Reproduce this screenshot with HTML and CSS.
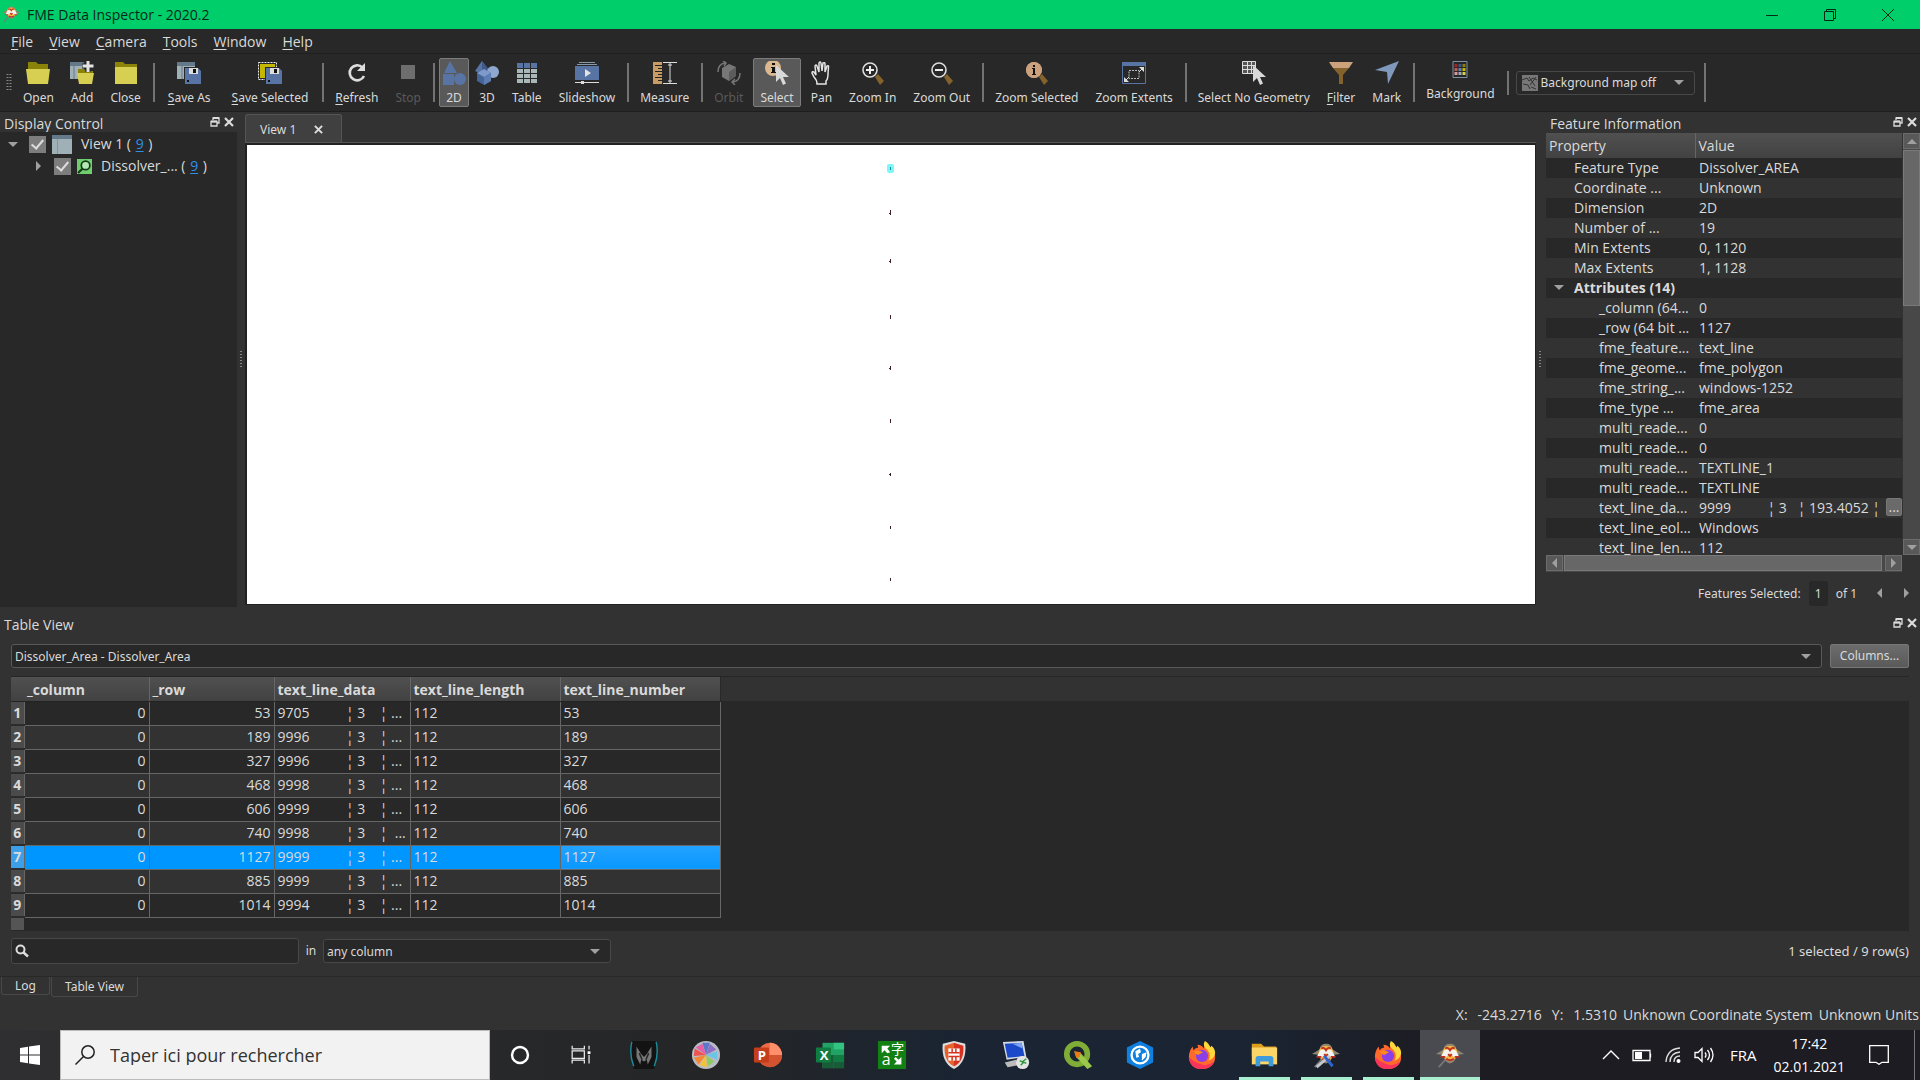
FILE: index.html
```html
<!DOCTYPE html>
<html lang="en">
<head>
  <meta charset="UTF-8">
  <title>FME Data Inspector - 2020.2</title>
  <link rel="stylesheet" href="styles.css">
</head>
<body>

  <!-- shared icons -->
  <svg class="defs" aria-hidden="true">
    <symbol id="i-float" viewBox="0 0 10 10"><path d="M3 3V1h6v5H7M1 4.500h6V9H1z" fill="none" stroke="#ddd" stroke-width="1.300"/><path d="M3 1h6M1 4.500h6" stroke="#ddd" stroke-width="2"/></symbol>
    <symbol id="i-close" viewBox="0 0 10 10"><path d="M1 1l8 8M9 1L1 9" stroke="#ddd" stroke-width="2.200"/></symbol>
    <symbol id="i-lens" viewBox="0 0 24 24"><path d="M14 16l3-3 6 7-4 4z" fill="#84622c"/><circle cx="9" cy="9" r="7" fill="none" stroke="#ddd" stroke-width="1.600"/></symbol>
    <symbol id="i-disk" viewBox="0 0 16 16"><path d="M0 0h13l3 3v13H0z" fill="#5874a5"/><path d="M4 0h9v6H4z" fill="#ddd"/><path d="M8 1h3v4H8zM2 12h2v2H2z" fill="#111"/></symbol>
    <symbol id="i-cursor" viewBox="0 0 14 20"><path d="M1 0v17l4-4 3 7 3-1.500-3-6.500h6z" fill="#d8d8d8"/></symbol>
    <symbol id="i-eagle" viewBox="0 0 32 32">
      <path d="M12 20L4 29" stroke="#777" stroke-width="2"/>
      <path d="M16 4q6 0 7 6l8 5-8 1q-1 8-7 9-6-1-7-9l-8-1 8-5q1-6 7-6z" fill="#8f8672"/>
      <circle cx="16" cy="14" r="8" fill="#f4b63e"/>
      <path d="M10 11q3-2 6 1 3-3 6-1l4 7h-6l-4-4-4 4H6z" fill="#f3f3f0"/>
      <path d="M11 9q3-2 5 2 2-4 5-2M6 18h5M26 18h-5M12 20q4 3 8 0M14 15l2 2 2-2" stroke="#c22c22" stroke-width="1.800" fill="none"/>
    </symbol>
    <symbol id="i-firefox" viewBox="0 0 32 32">
      <path d="M19 2q6 4 8 9 3 1 3 8c0 7-6 12-14 12S2 25 2 18q0-6 4-11l1 4q2-3 5-3l-1-3q5 0 7 4z" fill="#ff6a2b"/>
      <path d="M19 1q-3 6 3 10 4 5 1 11 6-2 7-8 0-5-4-8l-1 2q-2-5-6-7z" fill="#ffd83c"/>
      <path d="M2 18q1 13 14 13 10 0 13-8-6 5-13 3-8-2-14-8z" fill="#f8345d"/>
      <circle cx="16" cy="17" r="6.500" fill="#8a3fe8"/>
      <path d="M7 12q6-2 10 1l-5 3q-3-1-5-4z" fill="#ff8a1e"/>
    </symbol>
  </svg>

  <header class="titlebar">
    <svg class="app-icon" viewBox="1 2 29 28"><use href="#i-eagle"/></svg>
    <h1>FME Data Inspector - 2020.2</h1>
    <div class="window-buttons">
      <button aria-label="Minimize"><svg viewBox="0 0 12 12"><path d="M0 6.500h12"/></svg></button>
      <button aria-label="Restore"><svg viewBox="0 0 12 12"><path d="M.5 2.500h9v9h-9zM2.500 2.500v-2h9v9h-2"/></svg></button>
      <button aria-label="Close"><svg viewBox="0 0 12 12"><path d="M0 0l12 12M12 0L0 12"/></svg></button>
    </div>
  </header>

  <nav class="menubar">
    <button><u>F</u>ile</button>
    <button><u>V</u>iew</button>
    <button><u>C</u>amera</button>
    <button><u>T</u>ools</button>
    <button><u>W</u>indow</button>
    <button><u>H</u>elp</button>
  </nav>

  <div class="toolbar">
    <svg class="grip" viewBox="0 0 6 18"><path d="M1.500 0v18M4.500 0v18" stroke="#888" stroke-width="2" stroke-dasharray="1 2"/></svg>
    <div class="tools">
      <button><svg viewBox="0 0 24 24"><path d="M2 9V1h8l2 2h10v6z" fill="#8b8309"/><path d="M0 8h24l-2 15H2z" fill="#d6cf52"/></svg>Open</button>
      <button><svg viewBox="0 0 24 24"><path d="M0 1h14v17H0z" fill="#9fb0b6"/><path d="M0 1h14v4H0z" fill="#64798a"/><path d="M4 5v13" stroke="#64798a"/><path d="M8 13V8h6l2 2h7v3z" fill="#8b8309"/><path d="M7 12h17l-2 11H9z" fill="#d6cf52"/><path d="M18 0v11M12 5h12" stroke="#282828" stroke-width="5"/><path d="M18 0v11M12.500 5h11" stroke="#e4e4e4" stroke-width="3"/></svg>Add</button>
      <button><svg viewBox="0 0 24 24"><path d="M1 8V1h8l2 2h12v5z" fill="#8b8309"/><path d="M1 6h22v17H1z" fill="#d6cf52"/></svg>Close</button>
    </div>
    <div class="tools wide">
      <button><svg viewBox="0 0 24 24"><path d="M0 1h18v17H0z" fill="#9fb0b6"/><path d="M0 1h18v4H0z" fill="#64798a"/><path d="M5 5v13" stroke="#64798a"/><path d="M7 6h17v18H7z" fill="#282828"/><use href="#i-disk" x="8" y="7" width="16" height="16"/></svg><span><u>S</u>ave As</span></button>
      <button><svg viewBox="0 0 24 24"><path d="M2 3h15v14H2z" fill="#c4b900"/><path d="M.5 1.500h18v17H.5z" fill="none" stroke="#eee" stroke-dasharray="2 1"/><path d="M7 6h17v18H7z" fill="#282828"/><use href="#i-disk" x="8" y="7" width="16" height="16"/></svg><span><u>S</u>ave Selected</span></button>
    </div>
    <div class="tools">
      <button><svg viewBox="0 0 24 24"><path d="M17.500 6.500A7.500 7.500 0 1 0 19 15" fill="none" stroke="#ddd" stroke-width="2.600"/><path d="M20 2v8h-8z" fill="#ddd"/></svg><span><u>R</u>efresh</span></button>
      <button disabled><svg viewBox="0 0 24 24"><path d="M5 4h14v14H5z" fill="#6e6e6e"/></svg>Stop</button>
    </div>
    <div class="tools">
      <button class="active"><svg viewBox="0 0 24 24"><path d="M8 0l7 12H2zM1 13h11v11H1z" fill="#5874a5"/><circle cx="18" cy="18" r="6" fill="#5874a5"/></svg>2D</button>
      <button><svg viewBox="0 0 24 24"><path d="M7 0l7 9-7 4-7-3z" fill="#5874a5"/><path d="M7 0l7 9-7 4z" fill="#3f5a8a"/><circle cx="18" cy="11" r="6" fill="#8ea7cf"/><path d="M2 12l7-4 7 4v8l-7 4-7-4z" fill="#456599"/><path d="M2 12l7-4 7 4-7 4z" fill="#7d9aca"/><path d="M9 16l7-4v8l-7 4z" fill="#5d7db3"/></svg>3D</button>
      <button><svg viewBox="0 0 24 24"><path d="M2 2h6v5H2zM9 2h6v5H9zM16 2h6v5h-6z" fill="#5874a5"/><path d="M2 8h6v4H2zM9 8h6v4H9zM16 8h6v4h-6zM2 13h6v4H2zM9 13h6v4H9zM16 13h6v4h-6zM2 18h6v4H2zM9 18h6v4H9zM16 18h6v4h-6z" fill="#a9b7b7"/></svg>Table</button>
      <button><svg viewBox="0 0 24 24"><path d="M4 1.500h16M2 3.500h20" stroke="#8797ad"/><path d="M0 5h24v14H0z" fill="#5874a5"/><path d="M10 8l6 4-6 4z" fill="#e4e4e4"/><path d="M0 21.500h24" stroke="#ddd"/><path d="M6 20h3v3H6z" fill="#ddd"/></svg>Slideshow</button>
    </div>
    <div class="tools">
      <button><svg viewBox="0 0 24 24"><path d="M0 1h9v22H0z" fill="#c99c66"/><path d="M2 4.500h7M5 7.500h4M2 10.500h7M5 13.500h4M2 16.500h7M5 19.500h4" stroke="#222"/><path d="M10 1.500h14M10 22.500h14M17 2v20M15 4h4M15 20h4" stroke="#ddd"/></svg>Measure</button>
    </div>
    <div class="tools">
      <button disabled><svg viewBox="0 0 24 24"><path d="M5 7l7-4 7 3v9l-7 5-7-4z" fill="#777"/><path d="M12 11l7-5v9l-7 5z" fill="#5c5c5c"/><path d="M1 11Q1 3 8 2M23 12q0 8-7 9M6 0l3 2-2 3M18 18l-3 3 3 3" stroke="#777" stroke-width="1.500" fill="none"/></svg>Orbit</button>
      <button class="active"><svg viewBox="0 0 24 24"><circle cx="8" cy="7" r="8" fill="#dcb88e"/><path d="M7 2h3v2H7zM6 6h4v5h1v1H6v-1h1V7H6z" fill="#111"/><use href="#i-cursor" x="10" y="4" width="14" height="20"/></svg>Select</button>
      <button><svg viewBox="0 0 24 24"><path d="M8 23q0-4-3-7l-2-4q0-2 2-1l2 3-1-9q1-2 2 0l2 6V2q1-2 2 0l1 8 1-8q2-1 2 1v8l2-6q2-1 1.500 1L19 13q0 5-2 7v3z" fill="none" stroke="#e4e4e4" stroke-width="1.500"/></svg>Pan</button>
      <button><svg viewBox="0 0 24 24"><use href="#i-lens"/><path d="M5 9h8M9 5v8" stroke="#eee" stroke-width="2"/></svg>Zoom In</button>
      <button><svg viewBox="0 0 24 24"><use href="#i-lens"/><path d="M5 9h8" stroke="#eee" stroke-width="2"/></svg>Zoom Out</button>
    </div>
    <div class="tools">
      <button><svg viewBox="0 0 24 24"><use href="#i-lens"/><circle cx="9" cy="9" r="8" fill="#cba27b"/><path d="M8 4h2v2H8zM7 7h3v6h1v1H7v-1h1V8H7z" fill="#111"/></svg>Zoom Selected</button>
      <button><svg viewBox="0 0 24 24"><path d="M.5 1.500h23v21H.5z" fill="none" stroke="#5874a5"/><path d="M0 1h24v4H0z" fill="#5874a5"/><path d="M7 9.500h10v8H7z" fill="none" stroke="#bbb" stroke-dasharray="2 1"/><path d="M17 6h5v5zM2 16v5h5z" fill="#ddd"/><path d="M17 11l3-3M4 19l3-3" stroke="#ddd"/></svg>Zoom Extents</button>
    </div>
    <div class="tools">
      <button><svg viewBox="0 0 24 24"><path d="M.5.5h13v12H.5zM.5 4.500h13M.5 8.500h13M5.500.5v12M9.500.5v12" fill="#555" stroke="#ddd"/><use href="#i-cursor" x="10" y="4" width="14" height="20"/></svg>Select No Geometry</button>
      <button><svg viewBox="0 0 24 24"><path d="M0 1h24l-4 6H4z" fill="#cba27b"/><path d="M4 7h16l-6 7v9h-4v-9z" fill="#84622c"/></svg><span><u>F</u>ilter</span></button>
      <button><svg viewBox="0 0 24 24"><path d="M24 0L13 23l-1-12-12-2z" fill="#7f98bb"/></svg>Mark</button>
    </div>
    <div class="tools">
      <button class="raised"><svg viewBox="0 0 24 24"><path d="M5 .5h14v16H5z" fill="#272727" stroke="#8090a8"/><path d="M6.500 3h3v3h-3z" fill="#a32222"/><path d="M6.500 7h3v3h-3z" fill="#c05a5a"/><path d="M6.500 11h3v3h-3z" fill="#d99"/><path d="M10.500 3h3v3h-3z" fill="#3a5588"/><path d="M10.500 7h3v3h-3z" fill="#6680ad"/><path d="M10.500 11h3v3h-3z" fill="#9ab"/><path d="M14.500 3h3v3h-3z" fill="#8b8309"/><path d="M14.500 7h3v3h-3z" fill="#c4b900"/><path d="M14.500 11h3v3h-3z" fill="#d6cf52"/></svg>Background</button>
    </div>
    <div class="tools">
      <div class="combo map-combo">
        <svg class="map-icon" viewBox="0 0 16 16"><path d="M0 0h16v16H0z" fill="#777"/><path d="M0 5l5-2 2 3 4-3 4 2M1 9l5 1 2 4M7 2l6 9M14 2L8 10M9 12l5 2" fill="none" stroke="#333"/></svg>
        <select aria-label="Background map"><option>Background map off</option></select>
      </div>
    </div>
    <div class="tools last"></div>
  </div>

  <main class="workspace">
    <section class="display-control">
      <div class="dock-title"><h2>Display Control</h2>
        <button aria-label="Float"><svg><use href="#i-float"/></svg></button><button aria-label="Close"><svg><use href="#i-close"/></svg></button>
      </div>
      <div class="tree">
        <div class="tree-row">
          <span class="arrow down"></span>
          <input type="checkbox" id="view1" checked>
          <svg class="view-icon" viewBox="0 0 20 19"><path d="M0 0h20v19H0z" fill="#9fb0b6"/><path d="M0 0h20v4H0z" fill="#64798a"/><path d="M5.500 4v15" stroke="#84959c"/></svg>
          <label for="view1">View 1 ( <a href="#">9</a> )</label>
        </div>
        <div class="tree-row child">
          <span class="arrow right"></span>
          <input type="checkbox" id="dissolver" checked>
          <svg class="layer-icon" viewBox="0 0 14 14"><path d="M0 0h14v14H0z" fill="#6fcf70"/><circle cx="8" cy="6" r="4" fill="#b5e8b5" stroke="#143a16" stroke-width="1.600"/><path d="M5 9l-4 4" stroke="#143a16" stroke-width="2"/></svg>
          <label for="dissolver">Dissolver_... ( <a href="#">9</a> )</label>
        </div>
      </div>
    </section>

    <div class="splitter"></div>

    <section class="view">
      <div class="view-tabs">
        <div class="view-tab">View 1 <button aria-label="Close view"><svg><use href="#i-close"/></svg></button></div>
      </div>
      <div class="canvas">
        <svg width="20" height="456" viewBox="0 0 20 456">
          <rect x="6" y="19" width="7" height="9" rx="2" fill="#7ff6f8"/>
          <path d="M9.500 22v3" stroke="#0a8f98"/>
          <path d="M9.500 65v5M9.500 114v4M9.500 170v4M9.500 221v4M9.500 274v4M9.500 328v3M9.500 381v3M9.500 433v3M8 68.500h1M8 116.500h1M8 223.500h1M8 329.500h1" stroke="#3a1f28"/>
        </svg>
      </div>
    </section>

    <div class="splitter"></div>

    <section class="feature-info">
      <div class="dock-title"><h2>Feature Information</h2>
        <button aria-label="Float"><svg><use href="#i-float"/></svg></button><button aria-label="Close"><svg><use href="#i-close"/></svg></button>
      </div>
      <div class="props">
        <div class="props-clip">
          <table>
            <thead><tr><th>Property</th><th>Value</th></tr></thead>
            <tbody>
              <tr><td>Feature Type</td><td>Dissolver_AREA</td></tr>
              <tr><td>Coordinate ...</td><td>Unknown</td></tr>
              <tr><td>Dimension</td><td>2D</td></tr>
              <tr><td>Number of ...</td><td>19</td></tr>
              <tr><td>Min Extents</td><td>0, 1120</td></tr>
              <tr><td>Max Extents</td><td>1, 1128</td></tr>
              <tr class="group"><td><span class="arrow down"></span>Attributes (14)</td><td></td></tr>
              <tr class="attr"><td>_column (64...</td><td>0</td></tr>
              <tr class="attr"><td>_row (64 bit ...</td><td>1127</td></tr>
              <tr class="attr"><td>fme_feature...</td><td>text_line</td></tr>
              <tr class="attr"><td>fme_geome...</td><td>fme_polygon</td></tr>
              <tr class="attr"><td>fme_string_...</td><td>windows-1252</td></tr>
              <tr class="attr"><td>fme_type ...</td><td>fme_area</td></tr>
              <tr class="attr"><td>multi_reade...</td><td>0</td></tr>
              <tr class="attr"><td>multi_reade...</td><td>0</td></tr>
              <tr class="attr"><td>multi_reade...</td><td>TEXTLINE_1</td></tr>
              <tr class="attr"><td>multi_reade...</td><td>TEXTLINE</td></tr>
              <tr class="attr"><td>text_line_da...</td><td class="long"><div class="long-value"><span>9999          ¦ 3   ¦ 193.4052 ¦</span><button>...</button></div></td></tr>
              <tr class="attr"><td>text_line_eol...</td><td>Windows</td></tr>
              <tr class="attr"><td>text_line_len...</td><td>112</td></tr>
            </tbody>
          </table>
        </div>
        <div class="vscroll"><button aria-label="Up"><span class="arrow up"></span></button><div class="thumb"></div><button aria-label="Down"><span class="arrow down"></span></button></div>
        <div class="hscroll"><button aria-label="Left"><span class="arrow left"></span></button><div class="thumb"></div><button aria-label="Right"><span class="arrow right"></span></button></div>
      </div>
      <div class="feature-nav">
        <label for="feature">Features Selected:</label>
        <input type="text" id="feature" value="1">
        <span>of 1</span>
        <button aria-label="Previous"><span class="arrow left"></span></button>
        <button aria-label="Next"><span class="arrow right"></span></button>
      </div>
    </section>
  </main>

  <section class="table-view">
    <div class="dock-title"><h2>Table View</h2>
      <button aria-label="Float"><svg><use href="#i-float"/></svg></button><button aria-label="Close"><svg><use href="#i-close"/></svg></button>
    </div>
    <div class="table-source">
      <div class="combo"><select aria-label="Feature type"><option>Dissolver_Area - Dissolver_Area</option></select></div>
      <button class="push">Columns...</button>
    </div>
    <div class="grid-frame">
      <table class="data">
        <colgroup><col class="c-num"><col class="c-int"><col class="c-int"><col class="c-data"><col class="c-length"><col class="c-number"></colgroup>
        <thead><tr><th></th><th>_column</th><th>_row</th><th>text_line_data</th><th>text_line_length</th><th>text_line_number</th></tr></thead>
        <tbody>
          <tr><th>1</th><td>0</td><td>53</td><td>9705          ¦ 3    ¦ ...</td><td>112</td><td>53</td></tr>
          <tr><th>2</th><td>0</td><td>189</td><td>9996          ¦ 3    ¦ ...</td><td>112</td><td>189</td></tr>
          <tr><th>3</th><td>0</td><td>327</td><td>9996          ¦ 3    ¦ ...</td><td>112</td><td>327</td></tr>
          <tr><th>4</th><td>0</td><td>468</td><td>9998          ¦ 3    ¦ ...</td><td>112</td><td>468</td></tr>
          <tr><th>5</th><td>0</td><td>606</td><td>9999          ¦ 3    ¦ ...</td><td>112</td><td>606</td></tr>
          <tr><th>6</th><td>0</td><td>740</td><td>9998          ¦ 3    ¦  ...</td><td>112</td><td>740</td></tr>
          <tr class="selected"><th>7</th><td>0</td><td>1127</td><td>9999          ¦ 3    ¦ ...</td><td>112</td><td>1127</td></tr>
          <tr><th>8</th><td>0</td><td>885</td><td>9999          ¦ 3    ¦ ...</td><td>112</td><td>885</td></tr>
          <tr><th>9</th><td>0</td><td>1014</td><td>9994          ¦ 3    ¦ ...</td><td>112</td><td>1014</td></tr>
        </tbody>
        <tfoot><tr><th></th></tr></tfoot>
      </table>
      <div class="header-rest"></div>
    </div>
    <div class="filter-row">
      <div class="search">
        <svg viewBox="0 0 14 14"><circle cx="5.500" cy="5.500" r="4" fill="none" stroke="#ddd" stroke-width="2"/><path d="M8.500 8.500l4.500 4" stroke="#ddd" stroke-width="2.500"/></svg>
        <input type="text" aria-label="Search">
      </div>
      <label for="column">in</label>
      <div class="combo column-combo"><select id="column"><option>any column</option></select></div>
      <span class="row-count">1 selected / 9 row(s)</span>
    </div>
    <div class="dock-tabs">
      <button>Log</button>
      <button class="current">Table View</button>
    </div>
  </section>

  <footer class="statusbar">
    <span>X:</span><span>-243.2716</span><span>Y:</span><span>1.5310</span>
    <span class="system">Unknown Coordinate System</span><span class="units">Unknown Units</span>
  </footer>

  <div class="taskbar">
    <button class="start" aria-label="Start"><svg viewBox="0 0 20 20"><path d="M0 3l8-1.200V9.500H0zM9 1.600L20 0v9.500H9zM0 10.500h8v7.700L0 17zM9 10.500h11V20L9 18.400z" fill="#fff"/></svg></button>
    <label class="task-search">
      <svg viewBox="0 0 20 20"><circle cx="13" cy="7" r="6.200" fill="none" stroke="#222" stroke-width="1.500"/><path d="M8.500 11.500L.5 19.500" stroke="#222" stroke-width="1.500"/></svg>
      <input type="text" placeholder="Taper ici pour rechercher" aria-label="Taper ici pour rechercher">
    </label>
    <div class="apps">
      <button aria-label="Cortana"><svg viewBox="0 0 32 32"><circle cx="16" cy="16" r="8.500" fill="none" stroke="#fff" stroke-width="2.600"/></svg></button>
      <button aria-label="Task view"><svg viewBox="0 0 32 32"><path d="M5.500 6v3.500h13V6M5.500 25v-3.500h13V25M5.500 11.500h13v8h-13zM23.500 6v4M23.500 16v9" fill="none" stroke="#eee" stroke-width="1.300"/><path d="M22 12h3v3h-3z" fill="#fff"/></svg></button>
      <button aria-label="Predator"><svg viewBox="0 0 32 32"><path d="M3 1h26q2 15-2 30H5Q1 16 3 1z" fill="#131313"/><path d="M3 2Q0 15 5 28M29 2q3 13-2 26" stroke="#1a8c99" stroke-width="1.500" fill="none"/><path d="M8 7l5 8 3 3 3-3 5-8v11l-4 8-1-5-3 2-3-2-1 5-4-8z" fill="#777"/><path d="M11 14l3 7M21 14l-3 7" stroke="#222" stroke-width="1.500"/></svg></button>
      <button aria-label="Photos"><svg viewBox="0 0 32 32"><circle cx="16" cy="16" r="15" fill="#b9bcc4"/><path d="M16 16L12 3h8z" fill="#5c78c8"/><path d="M16 16L20 4l7 6z" fill="#8d71c6"/><path d="M16 16l12-4v9z" fill="#6cc4e8"/><path d="M16 16l9 7-7 5z" fill="#8ccc66"/><path d="M16 16l1 13-8-2z" fill="#f3c13c"/><path d="M16 16l-8 10-5-7z" fill="#f58634"/><path d="M16 16l-13 1 1-8z" fill="#ef5350"/><path d="M16 16L5 8l7-4z" fill="#e85fa5"/></svg></button>
      <button aria-label="PowerPoint"><svg viewBox="0 0 32 32"><circle cx="18" cy="16" r="13" fill="#ed6c47"/><path d="M18 3a13 13 0 0 1 13 13H18z" fill="#ff8f6b"/><path d="M5 16h26a13 13 0 0 1-26 0z" fill="#d35230"/><rect x="1" y="8" width="16" height="16" rx="1" fill="#c43e1c"/><text x="5" y="21" class="logo">P</text></svg></button>
      <button aria-label="Excel"><svg viewBox="0 0 32 32"><path d="M8 3h23v27H8z" fill="#21a366"/><path d="M20 3h11v7H20z" fill="#33c481"/><path d="M8 16h12v14H8z" fill="#185c37"/><path d="M20 16h11v7H20z" fill="#107c41"/><path d="M20 23h11v7H20z" fill="#185c37"/><rect x="1" y="8" width="16" height="16" rx="1" fill="#107c41"/><text x="5" y="21" class="logo">X</text></svg></button>
      <button aria-label="Translator"><svg viewBox="0 0 32 32"><path d="M1 1h30v30H1z" fill="#128012"/><text x="15" y="15" class="logo cjk">字</text><text x="5" y="27" class="logo plain">a</text><path d="M5 6l9 0-3 3 3 4-3 1-3-3-3 3zM26 18v8h-8l3-3-3-3 2-2 3 3z" fill="#fff"/></svg></button>
      <button aria-label="FortiClient"><svg viewBox="0 0 32 32"><path d="M16 1l12 3q2 20-12 27Q2 24 4 4z" fill="#ddd"/><path d="M16 3l10 3q1 17-10 22z" fill="#d6321f"/><path d="M16 3L6 6q-1 17 10 22z" fill="#e8622c"/><path d="M10 9h12v13H10z" fill="#fff"/><path d="M10 13.500h12M10 17.500h12M14 9v4M18 9v4M14 18v4M18 18v4" stroke="#d6321f" stroke-width="1.600"/></svg></button>
      <button aria-label="Remote desktop"><svg viewBox="0 0 32 32"><path d="M2 2l22-1 3 17-21 3z" fill="#d3dae6"/><path d="M4 4l18-1 3 14-18 2z" fill="#1c49c9"/><path d="M12 4l10-1 1 6z" fill="#7da4f2"/><path d="M4 24l12-3 2 6-11 2z" fill="#bbb"/><circle cx="23" cy="24" r="7" fill="#e4e4e4"/><path d="M20 22l4 2-3 3M27 20l-4 3 4 2" stroke="#2c9a3a" stroke-width="1.500" fill="none"/></svg></button>
      <button aria-label="QGIS"><svg viewBox="0 0 32 32"><circle cx="15" cy="15" r="11" fill="none" stroke="#80ad35" stroke-width="6"/><path d="M12 12l7 2 12 14-5 3-12-13z" fill="#9bc84b"/><path d="M12 12l7 1-1 5-4 1z" fill="#ee7913"/></svg></button>
      <button aria-label="ArcGIS"><svg viewBox="0 0 32 32"><path d="M16 1l14 7v16l-14 7-14-7V8z" fill="#0f7fe0"/><circle cx="16" cy="16" r="9" fill="none" stroke="#fff" stroke-width="2.500"/><path d="M11 12l5-3 1 4-3 2 1 3-3 1zM18 15l5-2-1 5-4 4z" fill="#fff"/></svg></button>
      <button aria-label="Firefox"><svg viewBox="0 0 32 32"><use href="#i-firefox"/></svg></button>
      <button class="running" aria-label="Explorer"><svg viewBox="0 0 32 32"><path d="M3 4h10l3 3h13v10H3z" fill="#dd9e1c"/><path d="M3 8h27v18H3z" fill="#fbd568"/><path d="M7 28v-8q0-3 3-3h13q3 0 3 3v8h-5v-5h-9v5z" fill="#3f9bdc"/></svg></button>
      <button class="running" aria-label="FME Workbench"><svg viewBox="0 0 32 32"><use href="#i-eagle"/><path d="M6 29l14-12" stroke="#c4c8cc" stroke-width="3"/><path d="M14 17l9 11" stroke="#2c66d4" stroke-width="3"/></svg></button>
      <button class="running" aria-label="Firefox"><svg viewBox="0 0 32 32"><use href="#i-firefox"/></svg></button>
      <button class="running focused" aria-label="FME Data Inspector"><svg viewBox="0 0 32 32"><use href="#i-eagle"/></svg></button>
    </div>
    <div class="tray">
      <svg viewBox="0 0 20 20"><path d="M2 14l8-8 8 8" fill="none" stroke="#fff" stroke-width="1.400"/></svg>
      <svg viewBox="0 0 20 20"><path d="M1 5.500h17v10H1zM18.500 8.500v4" fill="none" stroke="#fff" stroke-width="1.300"/><path d="M3 7h7v7H3z" fill="#fff"/></svg>
      <svg viewBox="0 0 20 20"><path d="M3 17Q4 4 17 3M7 17Q7 8 17 7M11 17q0-6 6-6" fill="none" stroke="#ddd" stroke-width="1.400"/><circle cx="15.500" cy="16" r="2" fill="#fff"/></svg>
      <svg viewBox="0 0 20 20"><path d="M1 7.500h3l4-4v13l-4-4H1zM11 7.500q2 2.500 0 5M13.500 5q4 5 0 10M16.500 3q5 7 0 14" fill="none" stroke="#fff" stroke-width="1.300"/></svg>
      <span>FRA</span>
      <time class="clock">17:42<br>02.01.2021</time>
      <svg class="notify" viewBox="0 0 20 20"><path d="M.7.7h18.600v16.600H13l-3 2-3-2H.7z" fill="none" stroke="#fff" stroke-width="1.300"/></svg>
    </div>
  </div>

</body>
</html>
```
FILE: styles.css
```css
* { box-sizing: border-box; }
body { margin: 0; height: 100vh; display: flex; flex-direction: column; overflow: hidden; background: #323232; color: #dadada; font: 14px/20px "Open Sans", "Noto Sans", sans-serif; }
button, input, select { font: inherit; color: inherit; background: none; border: 0; padding: 0; margin: 0; }
h1, h2 { margin: 0; font-size: 14px; font-weight: normal; }
svg { display: block; }
u { text-underline-offset: 2px; }
.defs { width: 0; height: 0; flex: none; position: absolute; }

/* title and menu */
.titlebar { height: 29px; flex: none; display: flex; align-items: center; background: #00ce6a; color: #06281a; }
.app-icon { width: 20px; height: 20px; margin: 0 5px 0 2px; }
.window-buttons { margin-left: auto; margin-right: 3px; display: flex; }
.window-buttons button { width: 58px; height: 28px; display: flex; align-items: center; justify-content: center; }
.window-buttons svg { width: 12px; height: 12px; fill: none; stroke: #002a12; }
.menubar { height: 25px; flex: none; display: flex; align-items: center; gap: 16px; padding: 1px 11px 0; background: #282828; border-bottom: 1px solid #202020; }

/* toolbar */
.toolbar { height: 58px; flex: none; display: flex; align-items: center; padding-left: 6px; background: #282828; border-bottom: 1px solid #1e1e1e; font: 12px/16px "Noto Sans", sans-serif; }
.grip { width: 6px; height: 18px; margin-right: -1px; }
.tools { display: flex; align-items: center; gap: 3px; padding: 0 5px; }
.tools + .tools { background: linear-gradient(#737373, #737373) left center / 2px 39px no-repeat; padding-left: 6px; }
.tools.last { height: 39px; }
.tools button { height: 49px; min-width: 30px; padding: 2px 6px 0; display: flex; flex-direction: column; align-items: center; gap: 5px; border: 1px solid transparent; border-radius: 2px; white-space: nowrap; }
.tools.wide button { padding: 2px 8px 0; }
.tools button svg { width: 24px; height: 24px; margin: 0 -4px; }
.tools button:disabled { color: #5a5a5a; }
.tools .active { background: #595959; border-color: #7c7c7c; }
.tools .raised { gap: 1px; }

/* combo boxes */
.combo { display: flex; align-items: center; height: 24px; background: #282828; border: 1px solid #484848; border-radius: 3px; font: 12px/16px "Noto Sans", sans-serif; }
.combo select { appearance: none; flex: 1; height: 22px; padding: 1px 3px 0; outline: 0; }
.combo::after { content: ""; border: 5px solid transparent; border-top-color: #a0a0a0; border-bottom: 0; margin-right: 10px; }
.map-combo { width: 179px; margin-left: 3px; margin-right: 4px; }
.map-combo svg { width: 16px; height: 16px; margin-left: 5px; }

/* docks */
.workspace { flex: 1; min-height: 0; display: flex; }
.dock-title { display: flex; align-items: center; gap: 4px; height: 20px; padding: 0 3px 0 4px; }
.dock-title h2 { flex: 1; padding-top: 3px; }
.dock-title svg { width: 10px; height: 10px; }
.splitter { width: 8px; flex: none; background: repeating-linear-gradient(#888 0 1px, transparent 1px 3px) center / 2px 18px no-repeat; }

.display-control { width: 237px; flex: none; display: flex; flex-direction: column; }
.tree { flex: 1; background: #282828; padding-top: 1px; margin-bottom: 1px; }
.tree-row { display: flex; align-items: center; height: 22px; padding-left: 8px; }
.tree-row.child { padding-left: 36px; }
.tree-row input { appearance: none; width: 17px; height: 17px; margin: 0 6px 0 11px; background: #7d7d7d; display: flex; justify-content: center; }
.tree-row.child input { margin-left: 13px; }
.tree-row input::after { content: ""; width: 5px; height: 10px; margin-top: 1px; border: solid #ddd; border-width: 0 2px 2px 0; transform: rotate(40deg); }
.tree-row label { margin-left: 9px; }
.tree a { color: #2f8fe8; text-underline-offset: 2px; margin: 0 1px; }
.view-icon { width: 20px; height: 19px; }
.layer-icon { width: 15px; height: 15px; }

.arrow { display: inline-block; width: 0; height: 0; border: 5px solid transparent; }
.arrow.down { border-top-color: #a0a0a0; border-bottom: 0; }
.arrow.up { border-bottom-color: #a0a0a0; border-top: 0; }
.arrow.left { border-right-color: #a0a0a0; border-left: 0; }
.arrow.right { border-left-color: #a0a0a0; border-right: 0; }

.view { flex: 1; min-width: 0; display: flex; flex-direction: column; padding: 2px 0 3px; }
.view-tabs { height: 29px; flex: none; display: flex; border-bottom: 1px solid #555; }
.view-tab { width: 97px; display: flex; align-items: center; justify-content: space-between; padding: 2px 18px 0 14px; background: #404040; border: 1px solid #555; border-bottom: 0; border-radius: 3px 3px 0 0; font: 12px/16px "Noto Sans", sans-serif; }
.view-tab svg { width: 9px; height: 9px; }
.canvas { flex: 1; min-height: 0; display: flex; justify-content: center; background: #fff; border: 1px solid #222; border-width: 2px 1px 1px 2px; }

.feature-info { width: 376px; flex: none; display: flex; flex-direction: column; padding-left: 2px; }
.props { flex: 1; min-height: 0; display: grid; grid-template: minmax(0, 1fr) 17px / minmax(0, 1fr) 18px; margin-top: 1px; }
.props-clip { overflow: hidden; background: #282828; }
.props table { width: 100%; table-layout: fixed; border-collapse: collapse; }
.props th { height: 25px; padding: 0 3px; text-align: left; font-weight: normal; background: linear-gradient(#505050, #424242); }
.props th:first-child { width: 149px; border-right: 1px solid #666; }
.props td { height: 20px; padding: 0 4px; line-height: 20px; white-space: pre; overflow: hidden; }
.props td:first-child { padding: 0 0 0 28px; }
.props td.long { padding-right: 0; }
.props .attr td:first-child { padding-left: 53px; }
.props tbody tr:nth-child(even) { background: #323232; }
.props .group { font-weight: bold; }
.props .group td:first-child { padding-left: 8px; }
.props .group .arrow { margin: 0 10px 3px 0; }
.long-value { display: flex; justify-content: space-between; height: 20px; }
.long-value button { width: 16px; height: 18px; line-height: 16px; background: #6a6a6a; border: 1px solid #777; border-radius: 2px; }
.vscroll, .hscroll { display: flex; background: #484848; gap: 1px; }
.vscroll { flex-direction: column; margin-left: 1px; }
.vscroll button, .hscroll button { width: 17px; height: 16px; display: flex; align-items: center; justify-content: center; background: #595959; border: 1px solid #6c6c6c; }
.thumb { background: #676767; border: 1px solid #7a7a7a; }
.vscroll .thumb { height: 37%; margin-bottom: auto; }
.hscroll .thumb { flex: 1; height: 16px; margin-right: 2px; }
.feature-nav { display: flex; align-items: center; height: 36px; justify-content: flex-end; font: 12px/16px "Noto Sans", sans-serif; padding: 7px 9px 0 0; }
.feature-nav input { width: 19px; height: 25px; margin: 0 8px; background: #282828; border-radius: 3px; text-align: center; }
.feature-nav button { width: 10px; margin-left: 17px; }

/* table view */
.table-view { flex: none; padding-top: 5px; }
.table-source { display: flex; gap: 8px; padding: 11px 11px 8px; height: 43px; }
.table-source .combo { flex: 1; border-color: #595959; }
.push { width: 79px; height: 24px; font: 12px/16px "Noto Sans", sans-serif; background: linear-gradient(#6c6c6c, #5a5a5a); border: 1px solid #777; border-radius: 2px; }
.grid-frame { display: flex; align-items: flex-start; height: 255px; margin: 0 11px; background: #282828; border-top: 1px solid #262626; }
.header-rest { flex: 1; height: 24px; background: #323232; }
.data { table-layout: fixed; width: 709px; flex: none; border-collapse: collapse; }
.c-num { width: 13px; }
.c-int { width: 125px; }
.c-data { width: 136px; }
.c-length { width: 150px; }
.c-number { width: 160px; }
.data thead th { height: 24px; padding: 2px 3px 0; text-align: left; background: linear-gradient(#505050, #424242); border-right: 1px solid #666; border-bottom: 1px solid #222; }
.data thead th:first-child, .data thead th:last-child { border-right: 0; }
.data td { height: 24px; padding: 0 3px; border: 1px solid #666; white-space: pre; overflow: hidden; }
.data td:nth-child(2), .data td:nth-child(3) { text-align: right; }
.data tbody th { padding: 0; background: #4b4b4b; border-bottom: 2px solid #2c2c2c; }
.data tbody tr:nth-child(even) { background: #323232; }
.data tbody .selected { background: #0096ff; }
.data .selected th { background: #3c9fe8; }
.data .selected td:last-child { background: linear-gradient(#22a2ff, #0a98ff); }
.data tfoot th { height: 13px; padding: 0; background: #555; }
.filter-row { display: flex; align-items: center; padding: 7px 11px 12px; font: 12px/16px "Noto Sans", sans-serif; }
.search { width: 288px; height: 26px; display: flex; align-items: center; gap: 4px; padding: 0 3px; background: #282828; border: 1px solid #484848; border-radius: 3px; }
.search svg { width: 14px; height: 14px; }
.search input { flex: 1; min-width: 0; }
.filter-row label { width: 24px; text-align: center; }
.column-combo { width: 288px; }
.row-count { margin-left: auto; font-size: 13px; }
.dock-tabs { display: flex; align-items: flex-start; height: 24px; padding-left: 1px; border-top: 1px solid #282828; font: 12px/16px "Noto Sans", sans-serif; }
.dock-tabs button { height: 18px; padding: 0 13px; border: 1px solid #484848; border-top: 0; border-radius: 0 0 3px 3px; margin-right: 1px; }
.dock-tabs .current { height: 20px; padding-top: 1px; }

.statusbar { height: 30px; flex: none; display: flex; align-items: center; justify-content: flex-end; gap: 10px; padding-right: 1px; }
.statusbar .system, .statusbar .units { margin-left: -4px; }

/* windows taskbar */
.taskbar { height: 50px; flex: none; display: flex; background: linear-gradient(90deg, #2f2f31, #242527 38%, #1a2432 50%, #1a2432 65%, #1d1c22 75%); color: #fff; }
.start { width: 60px; display: flex; align-items: center; justify-content: center; }
.start svg { width: 20px; height: 20px; }
.task-search { width: 430px; display: flex; align-items: center; gap: 15px; padding-left: 14px; background: #f2f2f2; border: 1px solid #bbb; color: #333; font-size: 18px; }
.task-search svg { width: 20px; height: 20px; }
.task-search input { flex: 1; outline: 0; }
.task-search input::placeholder { color: #333; opacity: 1; }
.apps { display: flex; }
.apps button { width: 60px; margin-right: 2px; display: flex; align-items: center; justify-content: center; }
.apps svg { width: 30px; height: 30px; }
.apps .running { background: linear-gradient(#a8efd0, #a8efd0) center bottom / 51px 3px no-repeat; }
.apps .focused { background: linear-gradient(#a8efd0, #a8efd0) center bottom / 60px 3px no-repeat #4a4a51; }
.logo { font: bold 14px "Open Sans", sans-serif; fill: #fff; }
.logo.cjk { font: 14px "Noto Sans CJK JP", sans-serif; }
.logo.plain { font-weight: normal; font-size: 17px; }
.tray { margin-left: auto; margin-right: 5px; padding-right: 25px; border-right: 1px solid #777; display: flex; align-items: center; font-size: 15px; }
.tray svg { width: 20px; height: 20px; margin-right: 11px; }
.tray span { margin: 0 17px 0 5px; }
.clock { font-size: 14px; line-height: 23px; text-align: center; margin-right: 24px; }
.tray .notify { margin: 0; }
```
